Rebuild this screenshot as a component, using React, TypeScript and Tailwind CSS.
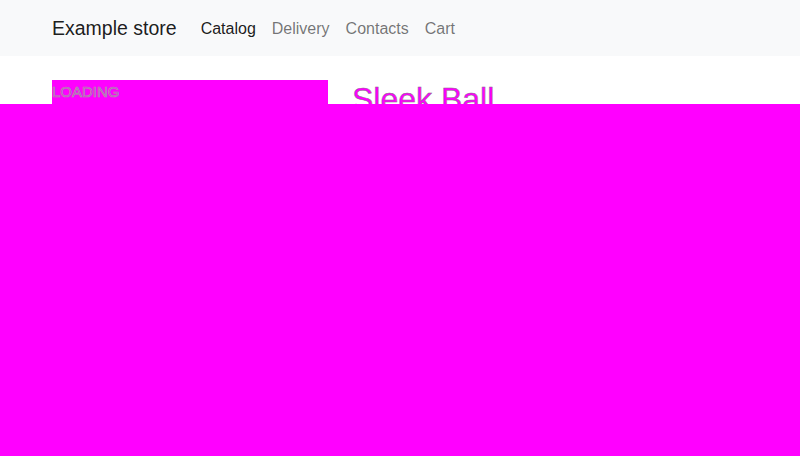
import React from 'react';

const NAV = [
  { label: 'Catalog', active: true },
  { label: 'Delivery', active: false },
  { label: 'Contacts', active: false },
  { label: 'Cart', active: false },
];

function Navbar() {
  return (
    <nav className="bg-[#f8f9fa] py-2">
      <div className="mx-auto flex w-[720px] items-center px-3">
        <a className="mr-4 py-[5px] text-[19.5px] leading-[30px] text-[rgba(0,0,0,0.9)]">
          Example store
        </a>
        <ul className="flex">
          {NAV.map((n) => (
            <li key={n.label}>
              <a
                className={
                  n.active
                    ? 'block px-2 pt-[9px] pb-[7px] text-[16px] leading-6 text-[rgba(0,0,0,0.9)]'
                    : 'block px-2 pt-[9px] pb-[7px] text-[16px] leading-6 text-[rgba(0,0,0,0.55)]'
                }
              >
                {n.label}
              </a>
            </li>
          ))}
        </ul>
      </div>
    </nav>
  );
}

export default function App() {
  return (
    <div className="relative min-h-[456px] overflow-hidden bg-white font-['Liberation_Sans',Arial,sans-serif] text-[#212529]">
      <Navbar />
      <main className="mx-auto mt-6 flex w-[720px] gap-6 px-3">
        <div className="h-[300px] w-[276px] shrink-0 bg-[#ff00ff]">
          <span className="block text-[15px] leading-6 text-[#ff00ff] [-webkit-text-stroke:0.7px_#a0a0a0]">
            LOADING
          </span>
        </div>
        <div className="flex-1">
          <h2 className="mb-2 text-[32px] leading-[38px] font-medium text-[#ff00ff] [-webkit-text-stroke:0.5px_#8a6a8a]">
            Sleek Ball
          </h2>
        </div>
      </main>
      {/* masked region */}
      <div className="absolute inset-x-0 top-[104px] bottom-0 bg-[#ff00ff]" />
    </div>
  );
}
